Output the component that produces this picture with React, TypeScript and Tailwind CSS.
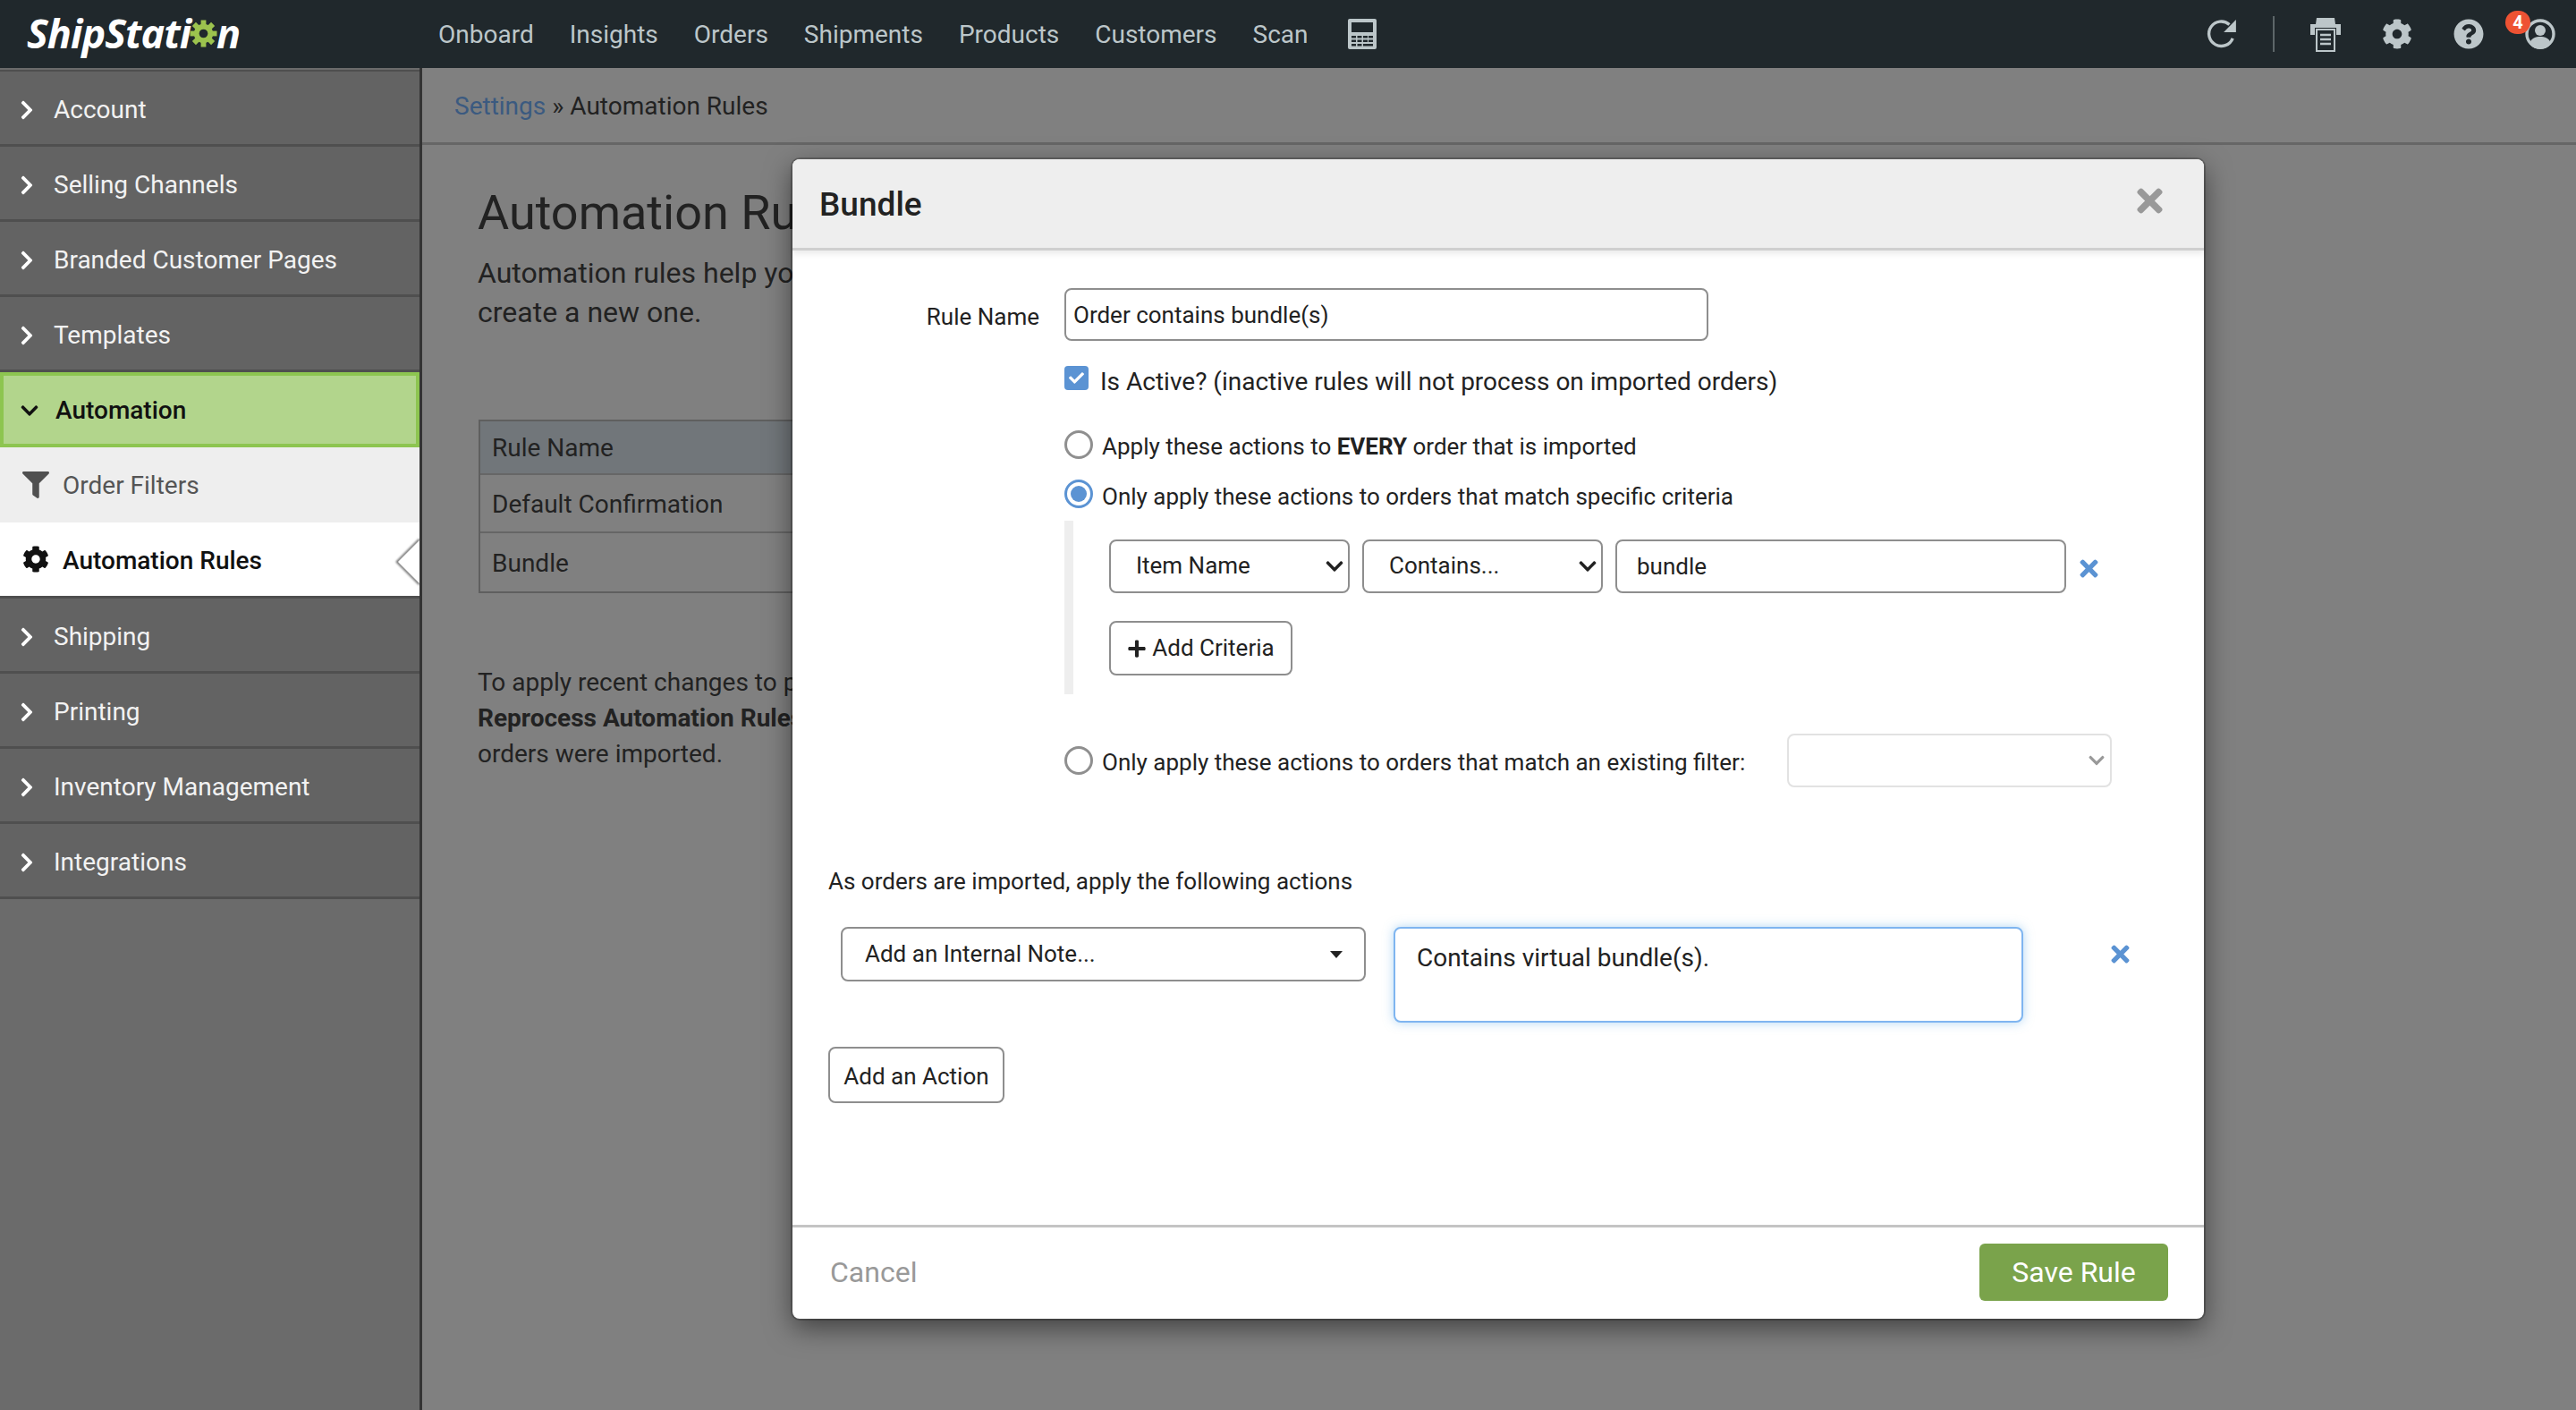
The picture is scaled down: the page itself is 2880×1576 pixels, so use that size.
import React from "react";
import { FaChevronRight, FaChevronDown, FaCog, FaQuestionCircle, FaFilter, FaTimes, FaPlus, FaCheck } from "react-icons/fa";

const NAV = ["Onboard", "Insights", "Orders", "Shipments", "Products", "Customers", "Scan"];

function Row({ label }: { label: string }) {
  return (
    <div className="flex h-[84px] items-center border-b-[3px] border-[#4f4f4f] bg-[#636363] pl-[18px] pt-[4px] text-[#f2f2f2]">
      <FaChevronRight className="mr-[18px] h-[24px] w-[24px] text-white" />
      <span>{label}</span>
    </div>
  );
}

function Radio({ on }: { on?: boolean }) {
  return (
    <span className={`mr-[10px] flex h-[32px] w-[32px] shrink-0 items-center justify-center rounded-full border-[3px] bg-white ${on ? "border-[#5b93d3]" : "border-[#8f8f8f]"}`}>
      {on && <span className="h-[18px] w-[18px] rounded-full bg-[#5b93d3]" />}
    </span>
  );
}

function RemoveX({ className }: { className?: string }) {
  return <FaTimes className={`h-[29px] w-[29px] text-[#5b93d3] ${className ?? ""}`} />;
}

function NativeSelect({ label }: { label: string }) {
  return (
    <span className="relative block h-[60px] w-[269px]">
      <select defaultValue={label} className="h-[60px] w-[269px] appearance-none rounded-[8px] border-2 border-[#8e8e8e] bg-white pl-[28px] text-[26px] text-[#222]">
        <option>{label}</option>
      </select>
      <FaChevronDown className="absolute right-[6px] top-[19px] h-[22px] w-[22px] text-[#222]" />
    </span>
  );
}

export default function App() {
  return (
    <div className="relative flex h-[1576px] w-[2880px] flex-col overflow-hidden bg-[#808080] font-['Roboto',sans-serif] text-[28px] text-[#222]">
      <header className="flex h-[76px] shrink-0 items-center bg-[#20282c] text-[#bcc6c9]">
        <div className="ml-[30px] mt-[-4px] flex w-[460px] items-center font-['Open_Sans',sans-serif] text-[45px] font-bold italic leading-none tracking-[-1px] text-white">
          ShipStati
          <svg viewBox="0 0 32 32" className="mx-[-1px] mt-[3px] h-[31px] w-[31px] text-[#9cc34e]">
            <g fill="currentColor">
              <circle cx="16" cy="16" r="11" />
              {[0, 45, 90, 135, 180, 225, 270, 315].map((a) => (
                <rect key={a} x="13" y="0.5" width="6" height="7" transform={`rotate(${a} 16 16)`} />
              ))}
            </g>
            <circle cx="16" cy="16" r="5" fill="#20282c" />
          </svg>
          n
        </div>
        <nav className="flex items-center gap-[40px] pt-[2px]">
          {NAV.map((n) => (
            <span key={n}>{n}</span>
          ))}
          <svg viewBox="0 0 32 34" className="ml-[4px] mt-[-2px] h-[34px] w-[32px]">
            <rect width="32" height="34" rx="2" fill="#bcc6c9" />
            <rect x="4" y="4" width="24" height="11" fill="#20282c" />
            {[19, 23.5, 28].map((y) =>
              [4, 10.5, 17, 23].map((x, i) =>
                y === 28 && i > 1 ? null : <rect key={`${x}-${y}`} x={x} y={y} width="5" height="2.5" fill="#20282c" />
              )
            )}
            <rect x="17" y="28" width="11" height="2.5" fill="#20282c" />
          </svg>
        </nav>
        <div className="ml-auto flex items-center text-[#bcc6c9]">
          <svg viewBox="0 0 34 34" className="h-[36px] w-[36px] translate-x-[1px]">
            <path d="M28.5 21.5A13 13 0 1 1 25 7" fill="none" stroke="currentColor" strokeWidth="3.2" />
            <path d="M32 2v13H19z" fill="currentColor" />
          </svg>
          <span className="mx-[40px] h-[40px] w-[2px] bg-[#5d6669]" />
          <svg viewBox="0 0 34 40" className="h-[40px] w-[34px]">
            <path d="M7 2h20l1 7h6v12h-5v-8H5v8H0V9h6z" fill="currentColor" />
            <rect x="7" y="15" width="20" height="24" fill="#20282c" stroke="currentColor" strokeWidth="2" />
            <path d="M11 21h12M11 26h12M11 31h12" stroke="currentColor" strokeWidth="2.4" />
          </svg>
          <FaCog className="ml-[46px] h-[34px] w-[34px]" />
          <FaQuestionCircle className="ml-[46px] h-[34px] w-[34px]" />
          <span className="relative ml-[46px] mr-[23px] h-[34px] w-[34px]">
            <svg viewBox="0 0 34 34" className="h-[34px] w-[34px]">
              <circle cx="17" cy="17" r="15" fill="none" stroke="currentColor" strokeWidth="3.4" />
              <circle cx="17" cy="13" r="6" fill="currentColor" />
              <path d="M5 28c2-7 7-8 12-8s10 1 12 8a15 15 0 0 1-24 0z" fill="currentColor" />
            </svg>
            <span className="absolute left-[-22px] top-[-9px] flex h-[26px] w-[28px] items-center justify-center rounded-full bg-[#ee5233] text-[20px] font-bold leading-none text-white">4</span>
          </span>
        </div>
      </header>

      <div className="flex min-h-0 flex-1">
        <aside className="relative flex w-[472px] shrink-0 flex-col border-r-[3px] border-[#333] bg-[#6b6b6b] pt-[2px]">
          <div className="h-[2px] bg-[#4f4f4f]" />
          <Row label="Account" />
          <Row label="Selling Channels" />
          <Row label="Branded Customer Pages" />
          <Row label="Templates" />
          <div className="flex h-[84px] items-center border-[4px] border-[#8dc550] bg-[#b2d58c] pl-[18px] pt-[2px] font-medium text-[#111]">
            <FaChevronDown className="mr-[18px] h-[22px] w-[22px]" />
            Automation
          </div>
          <div className="flex h-[84px] items-center bg-[#eeeeee] pl-[25px] pt-[2px] text-[#555]">
            <FaFilter className="mr-[15px] mt-[-2px] h-[30px] w-[30px] text-[#505050]" />
            Order Filters
          </div>
          <div className="relative flex h-[85px] items-center border-b-[3px] border-[#4f4f4f] bg-white pl-[25px] pt-[4px] font-medium text-[#111]">
            <FaCog className="mr-[15px] mt-[-4px] h-[30px] w-[30px]" />
            Automation Rules
            <svg viewBox="0 0 28 56" className="absolute right-0 top-[16px] h-[56px] w-[28px]">
              <path d="M28 3 L3 28 L28 53" fill="none" stroke="#6f6f6f" strokeWidth="2.5" className="blur-[1px]" />
              <path d="M28 4 L4 28 L28 52 Z" fill="#ffffff" />
            </svg>
          </div>
          <Row label="Shipping" />
          <Row label="Printing" />
          <Row label="Inventory Management" />
          <Row label="Integrations" />
        </aside>

        <main className="flex min-w-0 flex-1 flex-col">
          <div className="flex h-[86px] items-center border-b-[3px] border-[#666] pl-[36px] pt-[3px]">
            <span className="text-[#3b5a80]">Settings</span>
            <span className="ml-[7px]">» Automation Rules</span>
          </div>
          <div className="pl-[62px] pt-[42px]">
            <h1 className="text-[54px] leading-[68px] text-[#222]">Automation Rules</h1>
            <p className="mt-[11px] text-[32px] leading-[44px]">
              Automation rules help you
              <br />
              create a new one.
            </p>
            <div className="mt-[98px] ml-[1px] w-[800px] border-2 border-[#5f5f5f]">
              <div className="flex h-[60px] items-center border-b-2 border-[#666] bg-[#71767a] pl-[13px] pt-[2px]">Rule Name</div>
              <div className="flex h-[65px] items-center border-b-2 border-[#666] pl-[13px] pt-[2px]">Default Confirmation</div>
              <div className="flex h-[65px] items-center pl-[13px] pt-[2px]">Bundle</div>
            </div>
            <p className="mt-[80px] leading-[40px]">
              To apply recent changes to previously
              <br />
              <b className="font-bold">Reprocess Automation Rules</b>
              <br />
              orders were imported.
            </p>
          </div>
        </main>
      </div>

      <div className="absolute left-[886px] top-[178px] flex h-[1296px] w-[1578px] flex-col rounded-[8px] bg-white text-[26px] text-[#222] shadow-[0_10px_30px_rgba(0,0,0,0.5),0_0_0_2px_rgba(0,0,0,0.2)]">
        <div className="flex h-[102px] shrink-0 items-center justify-between rounded-t-[8px] border-b-[3px] border-[#cfcfcf] bg-[#eeeeee] pl-[30px] pr-[40px] pt-[3px] shadow-[0_4px_6px_rgba(0,0,0,0.08)]">
          <span className="text-[37px] font-medium text-[#222]">Bundle</span>
          <FaTimes className="mt-[-10px] h-[41px] w-[41px] text-[#999]" />
        </div>

        <div className="flex min-h-0 flex-1 flex-col">
          <div className="mt-[42px] flex h-[59px] items-center">
            <label className="mr-[28px] w-[276px] pt-[6px] text-right">Rule Name</label>
            <input readOnly value="Order contains bundle(s)" className="h-[59px] w-[720px] rounded-[8px] border-2 border-[#8e8e8e] bg-white px-[8px] text-[26px] text-[#222]" />
          </div>
          <div className="ml-[304px] mt-[28px] flex h-[27px] items-center text-[28px]">
            <span className="mr-[13px] flex h-[27px] w-[27px] items-center justify-center rounded-[4px] bg-[#5b93d3]">
              <FaCheck className="h-[17px] w-[17px] text-white" />
            </span>
            <span className="pt-[8px]">Is Active? (inactive rules will not process on imported orders)</span>
          </div>
          <div className="ml-[304px] mt-[45px] flex h-[32px] items-center">
            <Radio />
            <span className="pt-[4px]">Apply these actions to <b className="font-bold">EVERY</b> order that is imported</span>
          </div>
          <div className="ml-[304px] mt-[23px] flex h-[32px] items-center">
            <Radio on />
            <span className="pt-[6px]">Only apply these actions to orders that match specific criteria</span>
          </div>
          <div className="ml-[304px] mt-[14px] h-[194px] border-l-[10px] border-[#eeeeee] pl-[40px] pt-[20px]">
            <div className="flex h-[61px] items-center gap-[14px]">
              <NativeSelect label="Item Name" />
              <NativeSelect label="Contains..." />
              <input readOnly value="bundle" className="h-[60px] w-[504px] rounded-[8px] border-2 border-[#8e8e8e] bg-white px-[22px] text-[26px] text-[#222]" />
              <RemoveX className="ml-[-3px] mt-[6px]" />
            </div>
            <button className="mt-[31px] flex h-[61px] w-[205px] items-center justify-center rounded-[8px] border-2 border-[#8e8e8e] bg-white text-[26px]">
              <FaPlus className="mr-[6px] h-[22px] w-[22px]" />
              Add Criteria
            </button>
          </div>
          <div className="ml-[304px] mt-[44px] flex h-[60px] items-center">
            <Radio />
            <span className="w-[766px] pt-[5px]">Only apply these actions to orders that match an existing filter:</span>
            <span className="relative block h-[60px] w-[363px]">
              <select className="h-[60px] w-[363px] appearance-none rounded-[8px] border-2 border-[#e2e2e2] bg-white text-[#999]">
                <option></option>
              </select>
              <FaChevronDown className="absolute right-[7px] top-[20px] h-[20px] w-[20px] text-[#999]" />
            </span>
          </div>
          <div className="ml-[40px] mt-[90px] leading-[30px]">As orders are imported, apply the following actions</div>
          <div className="ml-[54px] mt-[36px] flex items-start">
            <div className="flex h-[61px] w-[587px] items-center justify-between rounded-[8px] border-2 border-[#8e8e8e] pl-[25px] pr-[24px]">
              <span>Add an Internal Note...</span>
              <span className="h-0 w-0 border-x-[7px] border-t-[8px] border-x-transparent border-t-[#222]" />
            </div>
            <textarea readOnly value="Contains virtual bundle(s)." className="ml-[31px] h-[107px] w-[704px] resize-none rounded-[8px] border-2 border-[#7fb5f0] bg-white px-[24px] pb-[14px] pt-[15px] text-[28px] leading-[36px] text-[#222] shadow-[0_0_12px_rgba(102,175,233,0.5)]" />
            <RemoveX className="ml-[94px] mt-[16px]" />
          </div>
          <button className="ml-[40px] mt-[27px] h-[63px] w-[197px] rounded-[8px] border-2 border-[#8e8e8e] bg-white pt-[4px] text-[26px]">Add an Action</button>
        </div>

        <div className="flex h-[105px] shrink-0 items-center justify-between border-t-[3px] border-[#c4c4c4] pl-[42px] pr-[40px]">
          <span className="mt-[-3px] text-[32px] text-[#999]">Cancel</span>
          <button className="mt-[-2px] h-[64px] w-[211px] rounded-[6px] bg-[#7aa34b] text-[32px] text-white">Save Rule</button>
        </div>
      </div>
    </div>
  );
}
